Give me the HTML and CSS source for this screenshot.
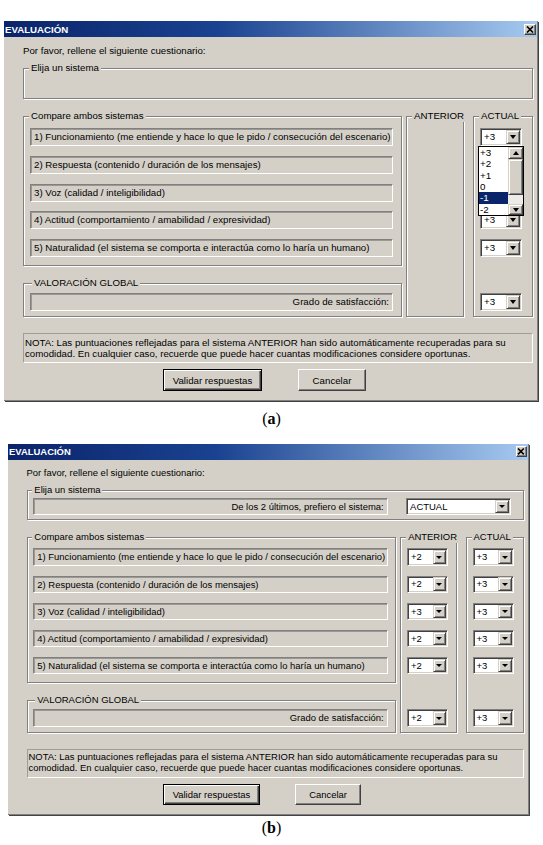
FILE: index.html
```html
<!DOCTYPE html>
<html lang="es">
<head>
  <meta charset="UTF-8">
  <meta name="viewport" content="width=device-width, initial-scale=1.0">
  <title>Evaluación</title>
  <link rel="stylesheet" href="styles.css">
</head>
<body>
  <div class="figure">

    <!-- (a) dialog with the open list -->
    <div class="shot shot-a">
      <div class="dialog">
        <div class="titlebar">
          <span class="title">EVALUACIÓN</span>
          <span class="close"><svg width="8" height="7" viewBox="0 0 8 7"><path d="M1 0.5 L7 6.5 M7 0.5 L1 6.5" stroke="#000" stroke-width="1.6"/></svg></span>
        </div>
        <div class="dialog-body">
          <p class="intro">Por favor, rellene el siguiente cuestionario:</p>

          <div class="group group-choose">
            <span class="legend">Elija un sistema</span>
            <div class="choose-row"></div>
          </div>

          <div class="scores">
            <div class="scores-left">
              <div class="group group-compare">
                <span class="legend">Compare ambos sistemas</span>
                <div class="rows">
                  <div class="field">1) Funcionamiento (me entiende y hace lo que le pido / consecución del escenario)</div>
                  <div class="field">2) Respuesta (contenido / duración de los mensajes)</div>
                  <div class="field">3) Voz (calidad / inteligibilidad)</div>
                  <div class="field">4) Actitud (comportamiento / amabilidad / expresividad)</div>
                  <div class="field">5) Naturalidad (el sistema se comporta e interactúa como lo haría un humano)</div>
                </div>
              </div>
              <div class="group group-global">
                <span class="legend legend-global">VALORACIÓN GLOBAL</span>
                <div class="field field-right">Grado de satisfacción:</div>
              </div>
            </div>

            <div class="group col col-prev">
              <span class="legend">ANTERIOR</span>
            </div>

            <div class="group col col-curr">
              <span class="legend">ACTUAL</span>
              <div class="rows">
                <div class="combo"><span class="combo-value">+3</span><span class="combo-btn"></span>
                  <div class="listbox">
                    <div class="list-items">
                      <div class="list-item">+3</div>
                      <div class="list-item">+2</div>
                      <div class="list-item">+1</div>
                      <div class="list-item">0</div>
                      <div class="list-item selected">-1</div>
                      <div class="list-item">-2</div>
                    </div>
                    <div class="scrollbar">
                      <span class="sb-btn sb-up"></span>
                      <span class="sb-thumb"></span>
                      <span class="sb-track"></span>
                      <span class="sb-btn sb-down"></span>
                    </div>
                  </div>
                </div>
                <!-- rows 2 and 3 sit fully under the open list -->
                <div class="combo"><span class="combo-value"></span><span class="combo-btn"></span></div>
                <div class="combo"><span class="combo-value"></span><span class="combo-btn"></span></div>
                <div class="combo"><span class="combo-value">+3</span><span class="combo-btn"></span></div>
                <div class="combo"><span class="combo-value">+3</span><span class="combo-btn"></span></div>
              </div>
              <div class="combo combo-global"><span class="combo-value">+3</span><span class="combo-btn"></span></div>
            </div>
          </div>

          <div class="note">NOTA: Las puntuaciones reflejadas para el sistema ANTERIOR han sido automáticamente recuperadas para su<br>comodidad. En cualquier caso, recuerde que puede hacer cuantas modificaciones considere oportunas.</div>

          <div class="buttons">
            <button type="button" class="btn btn-default">Validar respuestas</button>
            <button type="button" class="btn">Cancelar</button>
          </div>
        </div>
      </div>
    </div>
    <div class="caption">(<b>a</b>)</div>

    <!-- (b) dialog filled in -->
    <div class="shot shot-b">
      <div class="dialog">
        <div class="titlebar">
          <span class="title">EVALUACIÓN</span>
          <span class="close"><svg width="8" height="7" viewBox="0 0 8 7"><path d="M1 0.5 L7 6.5 M7 0.5 L1 6.5" stroke="#000" stroke-width="1.6"/></svg></span>
        </div>
        <div class="dialog-body">
          <p class="intro">Por favor, rellene el siguiente cuestionario:</p>

          <div class="group group-choose">
            <span class="legend">Elija un sistema</span>
            <div class="choose-row">
              <div class="field field-right field-choose">De los 2 últimos, prefiero el sistema:</div>
              <div class="combo combo-wide"><span class="combo-value">ACTUAL</span><span class="combo-btn"></span></div>
            </div>
          </div>

          <div class="scores">
            <div class="scores-left">
              <div class="group group-compare">
                <span class="legend">Compare ambos sistemas</span>
                <div class="rows">
                  <div class="field">1) Funcionamiento (me entiende y hace lo que le pido / consecución del escenario)</div>
                  <div class="field">2) Respuesta (contenido / duración de los mensajes)</div>
                  <div class="field">3) Voz (calidad / inteligibilidad)</div>
                  <div class="field">4) Actitud (comportamiento / amabilidad / expresividad)</div>
                  <div class="field">5) Naturalidad (el sistema se comporta e interactúa como lo haría un humano)</div>
                </div>
              </div>
              <div class="group group-global">
                <span class="legend legend-global">VALORACIÓN GLOBAL</span>
                <div class="field field-right">Grado de satisfacción:</div>
              </div>
            </div>

            <div class="group col col-prev">
              <span class="legend">ANTERIOR</span>
              <div class="rows">
                <div class="combo"><span class="combo-value">+2</span><span class="combo-btn"></span></div>
                <div class="combo"><span class="combo-value">+2</span><span class="combo-btn"></span></div>
                <div class="combo"><span class="combo-value">+3</span><span class="combo-btn"></span></div>
                <div class="combo"><span class="combo-value">+2</span><span class="combo-btn"></span></div>
                <div class="combo"><span class="combo-value">+2</span><span class="combo-btn"></span></div>
              </div>
              <div class="combo combo-global"><span class="combo-value">+2</span><span class="combo-btn"></span></div>
            </div>

            <div class="group col col-curr">
              <span class="legend">ACTUAL</span>
              <div class="rows">
                <div class="combo"><span class="combo-value">+3</span><span class="combo-btn"></span></div>
                <div class="combo"><span class="combo-value">+3</span><span class="combo-btn"></span></div>
                <div class="combo"><span class="combo-value">+3</span><span class="combo-btn"></span></div>
                <div class="combo"><span class="combo-value">+3</span><span class="combo-btn"></span></div>
                <div class="combo"><span class="combo-value">+3</span><span class="combo-btn"></span></div>
              </div>
              <div class="combo combo-global"><span class="combo-value">+3</span><span class="combo-btn"></span></div>
            </div>
          </div>

          <div class="note">NOTA: Las puntuaciones reflejadas para el sistema ANTERIOR han sido automáticamente recuperadas para su<br>comodidad. En cualquier caso, recuerde que puede hacer cuantas modificaciones considere oportunas.</div>

          <div class="buttons">
            <button type="button" class="btn btn-default">Validar respuestas</button>
            <button type="button" class="btn">Cancelar</button>
          </div>
        </div>
      </div>
    </div>
    <div class="caption caption-b">(<b>b</b>)</div>

  </div>
</body>
</html>
```

FILE: styles.css
```css
body {
  margin: 0;
  background: #fff;
  font-family: "Liberation Sans", Arial, sans-serif;
}
.figure {
  width: 543px;
  padding-top: 21px;
}
.shot-a {
  padding-left: 4px;
}
.shot-b {
  padding-left: 8px;
  margin-top: 15px;
}
.shot-b .dialog {
  zoom: 0.976;
}
.caption {
  margin-top: 8px;
  text-align: center;
  font-family: "Liberation Serif", "Times New Roman", serif;
  font-size: 16px;
  line-height: 20px;
}
.caption-b {
  margin-top: 3px;
}

/* window */
.dialog {
  width: 534px;
  box-sizing: border-box;
  background: #d4d0c8;
  border-right: 1px solid #808080;
  border-bottom: 1px solid #808080;
  box-shadow: 1px 1px 0 #404040;
  font-size: 9.7px;
  color: #000;
}
.titlebar {
  height: 16px;
  display: flex;
  align-items: center;
  justify-content: space-between;
  padding: 0 1px 0 1px;
  background: linear-gradient(to right, #0a246a 0%, #1a4290 40%, #a6caf0 100%);
}
.title {
  color: #fff;
  font-weight: bold;
  font-size: 9.7px;
}
.close {
  width: 12px;
  height: 11px;
  box-sizing: border-box;
  display: flex;
  align-items: center;
  justify-content: center;
  background: #d4d0c8;
  border: 1px solid;
  border-color: #fff #404040 #404040 #fff;
  box-shadow: inset -1px -1px 0 #808080;
}
.dialog-body {
  padding: 8px 4px 9px 19px;
}
.intro {
  margin: 0;
  line-height: 12px;
}

/* group boxes */
.group {
  position: relative;
  box-sizing: border-box;
  border: 1px solid #808080;
  box-shadow: inset 1px 1px 0 #fff, 1px 1px 0 #fff;
}
.legend {
  position: absolute;
  top: -7px;
  left: 5px;
  padding: 0 2px;
  line-height: 12px;
  background: #d4d0c8;
  white-space: nowrap;
}
.legend-global {
  left: 8px;
}
.group-choose {
  margin-top: 11px;
  padding: 7px 0 4px 6px;
}
.choose-row {
  height: 18px;
  display: flex;
}
.field-choose {
  width: 363px;
}
.scores {
  display: flex;
  margin-top: 17px;
}
.scores-left {
  width: 379px;
}
.group-compare {
  padding: 11px 8px 8px 6px;
}
.rows {
  display: flex;
  flex-direction: column;
  gap: 9.75px;
}
.group-global {
  margin-top: 17px;
  padding: 9px 8px 5px 6px;
}
.col {
  padding: 11px 0 0 6px;
}
.col-prev {
  width: 58px;
  margin-left: 4px;
}
.col-curr {
  width: 60px;
  margin-left: 9px;
}
.combo-global {
  margin-top: 36px;
}

/* sunken static text */
.field {
  height: 18px;
  box-sizing: border-box;
  border: 1px solid;
  border-color: #808080 #fff #fff #808080;
  box-shadow: inset 1px 1px 0 #9a9893;
  padding: 0 3px;
  line-height: 16px;
  white-space: nowrap;
  overflow: hidden;
}
.field-right {
  text-align: right;
}

/* combo box */
.combo {
  position: relative;
  width: 42px;
  height: 18px;
  box-sizing: border-box;
  display: flex;
  align-items: center;
  justify-content: space-between;
  padding: 1px;
  background: #fff;
  border: 1px solid;
  border-color: #808080 #fff #fff #808080;
  box-shadow: inset 1px 1px 0 #404040, inset -1px -1px 0 #d4d0c8;
}
.combo-wide {
  width: 107px;
  margin-left: 19px;
}
.combo-value {
  padding-left: 2px;
  line-height: 14px;
}
.combo-btn {
  width: 14px;
  height: 14px;
  box-sizing: border-box;
  display: flex;
  align-items: center;
  justify-content: center;
  background: #d4d0c8;
  border: 1px solid;
  border-color: #d4d0c8 #404040 #404040 #d4d0c8;
  box-shadow: inset 1px 1px 0 #fff, inset -1px -1px 0 #808080;
}
.combo-btn::after {
  content: "";
  border-left: 3.5px solid transparent;
  border-right: 3.5px solid transparent;
  border-top: 4px solid #000;
}

/* open drop-down list */
.listbox {
  position: absolute;
  top: calc(100% + 1px);
  left: -3px;
  z-index: 2;
  width: 46px;
  height: 70px;
  box-sizing: border-box;
  display: flex;
  background: #fff;
  border: 1px solid #000;
}
.list-items {
  flex: 1;
}
.list-item {
  height: 11.33px;
  line-height: 11.33px;
  padding-left: 1px;
  font-size: 9.8px;
  overflow: hidden;
}
.list-item.selected {
  background: #0a246a;
  color: #fff;
}
.scrollbar {
  width: 15px;
  display: flex;
  flex-direction: column;
}
.sb-btn,
.sb-thumb {
  box-sizing: border-box;
  background: #d4d0c8;
  border: 1px solid;
  border-color: #d4d0c8 #404040 #404040 #d4d0c8;
  box-shadow: inset 1px 1px 0 #fff, inset -1px -1px 0 #808080;
}
.sb-btn {
  display: flex;
  align-items: center;
  justify-content: center;
}
.sb-up {
  height: 12px;
}
.sb-up::after {
  content: "";
  border-left: 3.5px solid transparent;
  border-right: 3.5px solid transparent;
  border-bottom: 4px solid #000;
}
.sb-down {
  height: 11px;
}
.sb-down::after {
  content: "";
  border-left: 3.5px solid transparent;
  border-right: 3.5px solid transparent;
  border-top: 4px solid #000;
}
.sb-thumb {
  height: 36px;
}
.sb-track {
  height: 9px;
  background: #ecebe7;
}

/* note and buttons */
.note {
  margin-top: 16px;
  height: 30px;
  box-sizing: border-box;
  padding: 3px 1px;
  line-height: 11px;
  border: 1px solid;
  border-color: #a09d97 #fff #fff #a09d97;
  white-space: nowrap;
}
.buttons {
  display: flex;
  gap: 36px;
  margin-top: 6px;
  padding-left: 140px;
}
.btn {
  height: 22px;
  box-sizing: border-box;
  padding: 0;
  font-family: "Liberation Sans", Arial, sans-serif;
  font-size: 9.7px;
  color: #000;
  background: #d4d0c8;
  border: 1px solid;
  border-color: #fff #404040 #404040 #fff;
  box-shadow: inset -1px -1px 0 #808080;
  width: 68px;
}
.btn-default {
  width: 99px;
  border-color: #000;
  box-shadow: inset 1px 1px 0 #fff, inset -1px -1px 0 #404040, inset -2px -2px 0 #808080;
}
```
